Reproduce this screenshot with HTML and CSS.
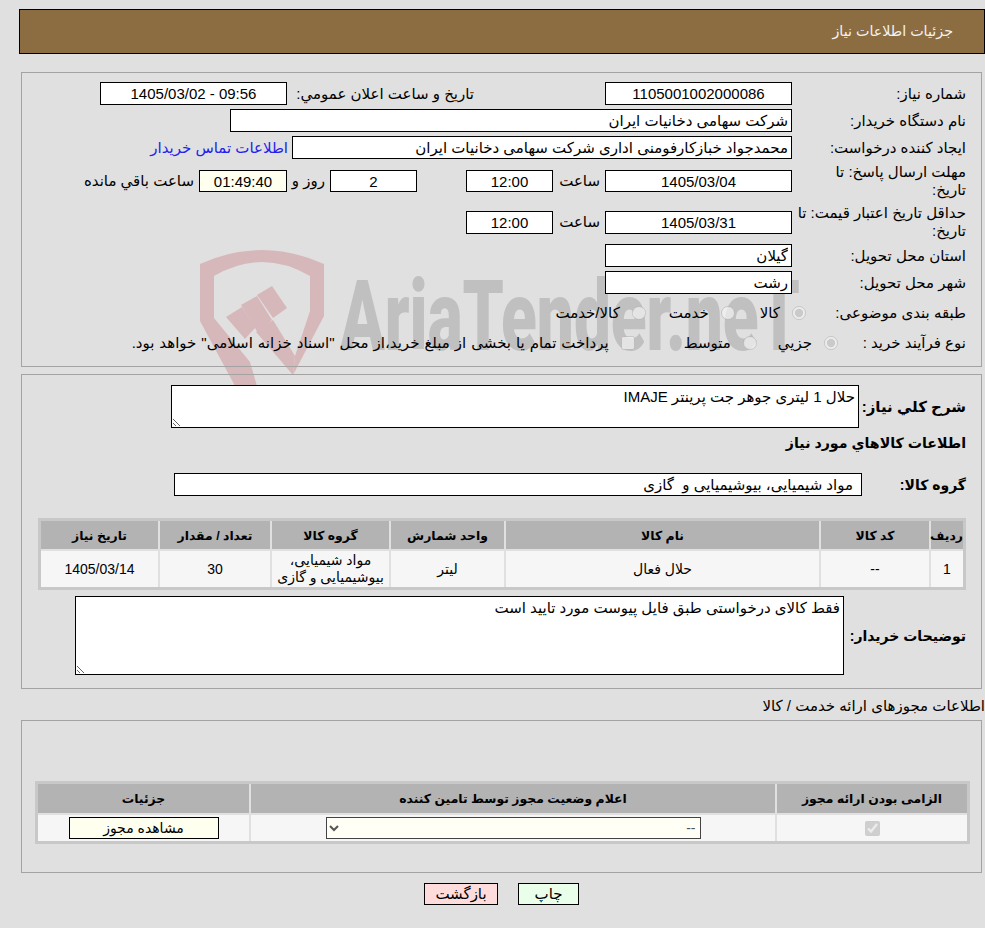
FILE: index.html
```html
<!DOCTYPE html>
<html lang="fa" dir="rtl">
<head>
<meta charset="utf-8">
<title>جزئیات اطلاعات نیاز</title>
<link rel="stylesheet" href="styles.css">
</head>
<body>
<svg class="watermark" viewBox="0 0 620 155" width="620" height="155" aria-hidden="true">
  <path class="wm-shield" d="M0 33 Q62 5 124 33 L124 85 L93 144 L95 125 L110 80 L110 45 Q62 17 14 45 L14 87 L50 131 L57 155 L35 155 L0 90 Z"/>
  <path class="wm-shield" d="M26 86 L42 76 L55 97 L45 108 Z M41 74 L57 65 L72 89 L58 102 Z M57 64 L72 55 L87 77 L73 87 Z M56 101 L73 89 L95 125 L93 144 Z"/>
  <text class="wm-text" x="140" y="119" textLength="460" lengthAdjust="spacingAndGlyphs">AriaTender.neT</text>
</svg>

<header class="page-title">جزئیات اطلاعات نیاز</header>

<section class="panel panel-main">
  <div class="row">
    <label class="lbl">شماره نیاز:</label>
    <input class="field w-date center" value="1105001002000086" readonly>
    <label class="lbl-public">تاریخ و ساعت اعلان عمومي:</label>
    <input class="field w-date center" dir="ltr" value="1405/03/02 - 09:56" readonly>
  </div>
  <div class="row">
    <label class="lbl">نام دستگاه خریدار:</label>
    <input class="field w-buyer" value="شرکت سهامی دخانیات ایران" readonly>
  </div>
  <div class="row">
    <label class="lbl">ایجاد کننده درخواست:</label>
    <input class="field w-creator" value="محمدجواد خبازکارفومنی اداری شرکت سهامی دخانیات ایران" readonly>
    <a class="contact" href="#">اطلاعات تماس خریدار</a>
  </div>
  <div class="row row-tall row-deadline">
    <label class="lbl">مهلت ارسال پاسخ: تا<br>تاریخ:</label>
    <input class="field w-date center short" value="1405/03/04" readonly>
    <span class="hour">ساعت</span>
    <input class="field w-time center short" value="12:00" readonly>
    <input class="field w-days center short" value="2" readonly>
    <span class="days-and">روز و</span>
    <input class="field w-count countdown center short" value="01:49:40" readonly>
    <span class="remain">ساعت باقي مانده</span>
  </div>
  <div class="row row-tall">
    <label class="lbl">حداقل تاریخ اعتبار قیمت: تا<br>تاریخ:</label>
    <input class="field w-date center" value="1405/03/31" readonly>
    <span class="hour">ساعت</span>
    <input class="field w-time center" value="12:00" readonly>
  </div>
  <div class="row">
    <label class="lbl">استان محل تحویل:</label>
    <input class="field w-date" value="گیلان" readonly>
  </div>
  <div class="row">
    <label class="lbl">شهر محل تحویل:</label>
    <input class="field w-date" value="رشت" readonly>
  </div>
  <div class="row row-choice row-first-choice">
    <label class="lbl lbl-choice">طبقه بندی موضوعی:</label>
    <input class="mark" type="radio" name="kind" checked disabled>
    <span class="opt opt-a">کالا</span>
    <input class="mark" type="radio" name="kind" disabled>
    <span class="opt opt-b">خدمت</span>
    <input class="mark" type="radio" name="kind" disabled>
    <span class="opt">کالا/خدمت</span>
  </div>
  <div class="row row-choice">
    <label class="lbl lbl-process">نوع فرآیند خرید :</label>
    <input class="mark" type="radio" name="proc" checked disabled>
    <span class="opt opt-c">جزيي</span>
    <input class="mark" type="radio" name="proc" disabled>
    <span class="opt opt-d">متوسط</span>
    <input class="mark" type="checkbox" disabled>
    <span class="opt opt-long">پرداخت تمام یا بخشی از مبلغ خرید،از محل "اسناد خزانه اسلامی" خواهد بود.</span>
  </div>
</section>

<section class="panel panel-goods">
  <div class="row-need">
    <label class="lbl-bold lbl-need">شرح کلي نیاز:</label>
    <textarea class="note note-need" readonly>حلال 1 لیتری جوهر جت پرینتر IMAJE</textarea>
  </div>
  <h2 class="goods-heading">اطلاعات کالاهاي مورد نیاز</h2>
  <div class="row-group">
    <label class="lbl-bold lbl-group">گروه کالا:</label>
    <input class="field w-group" value="مواد شیمیایی، بیوشیمیایی و  گازی" readonly>
  </div>
  <table class="grid grid-goods">
    <colgroup>
      <col class="c1"><col class="c2"><col class="c3"><col class="c4"><col class="c5"><col class="c6"><col class="c7">
    </colgroup>
    <thead>
      <tr><th>ردیف</th><th>کد کالا</th><th>نام کالا</th><th>واحد شمارش</th><th>گروه کالا</th><th>تعداد / مقدار</th><th>تاریخ نیاز</th></tr>
    </thead>
    <tbody>
      <tr><td>1</td><td>--</td><td>حلال فعال</td><td>لیتر</td><td>مواد شیمیایی، بیوشیمیایی و گازی</td><td>30</td><td>1405/03/14</td></tr>
    </tbody>
  </table>
  <div class="row-remark">
    <label class="lbl-bold lbl-remark">توضیحات خریدار:</label>
    <textarea class="note note-remark" readonly>فقط کالای درخواستی طبق فایل پیوست مورد تایید است</textarea>
  </div>
</section>

<div class="license-title">اطلاعات مجوزهای ارائه خدمت / کالا</div>

<section class="panel panel-license">
  <table class="grid grid-license">
    <colgroup><col class="l1"><col class="l2"><col class="l3"></colgroup>
    <thead>
      <tr><th>الزامی بودن ارائه مجوز</th><th>اعلام وضعیت مجوز توسط تامین کننده</th><th>جزئیات</th></tr>
    </thead>
    <tbody>
      <tr>
        <td><input class="license-check" type="checkbox" checked disabled></td>
        <td><select class="license-select" disabled><option>--</option></select></td>
        <td><button class="license-btn" type="button">مشاهده مجوز</button></td>
      </tr>
    </tbody>
  </table>
</section>

<div class="actions">
  <button class="btn btn-print" type="button">چاپ</button>
  <button class="btn btn-back" type="button">بازگشت</button>
</div>
</body>
</html>
```

FILE: styles.css
```css
html { background: #e0e0e0; }
body {
  margin: 9px 0 0 0;
  font-family: "Liberation Sans", "DejaVu Sans", sans-serif;
  font-size: 15px;
  color: #000;
  position: relative;
}
input, textarea, select, button { font: inherit; color: #000; margin: 0; }

.watermark { position: absolute; left: 200px; top: 222px; z-index: -1; direction: ltr; }
.wm-shield { fill: #d7b8ba; }
.wm-text { fill: #c0c0c0; font-family: Roboto, sans-serif; font-weight: 900; font-size: 98px; }

.page-title {
  margin: 0 0 18px 19px;
  height: 45px;
  box-sizing: border-box;
  border: 1px solid #000;
  background: #8c6d42;
  color: #f2f2f2;
  font-size: 14.3px;
  line-height: 43px;
  padding-right: 31px;
}

.panel { border: 1px solid #a3a3a3; margin: 0 3px 0 21px; box-sizing: border-box; }
.panel-main { margin-bottom: 7px; height: 295px; padding: 9px 15px 0 16px; }
.panel-goods { height: 315px; padding: 10px 15px 0 16px; }
.panel-license { height: 153px; padding: 60px 11px 0 0; }

.row { display: flex; align-items: center; height: 23px; margin-bottom: 4px; }
.row-tall { height: 36px; }
.row-deadline { margin-bottom: 5px; }
.row-choice { height: 30px; margin: 0; }
.row-first-choice { margin-top: 4px; }

.lbl { width: 174px; flex: none; line-height: 18px; white-space: nowrap; }
.lbl-choice { width: 160px; }
.lbl-process { width: 128px; }
.lbl-public { width: 187px; margin-right: 131px; flex: none; white-space: nowrap; }

.field { height: 23px; box-sizing: border-box; border: 1px solid #000; background: #fff; padding: 0 3px; border-radius: 0; outline: none; flex: none; }
.short { height: 22px; }
.center { text-align: center; }
.w-date { width: 187px; }
.w-buyer { width: 562px; }
.w-creator { width: 500px; }
.w-time { width: 87px; }
.w-count { width: 88px; }
.w-days { width: 87px; margin-right: 49px; }
.w-group { width: 688px; padding-right: 8px; }
.countdown { background: #ffffef; }

.contact { color: #2222ee; text-decoration: none; margin-right: 4px; white-space: nowrap; }
.hour { width: 52px; padding-right: 5px; box-sizing: border-box; flex: none; }
.days-and { width: 43px; padding-right: 5px; box-sizing: border-box; flex: none; }
.remain { padding-right: 5px; white-space: nowrap; }

.mark { margin: 0; width: 14px; height: 14px; flex: none; }
.opt { margin-right: 12px; white-space: nowrap; }
.opt-a { margin-left: 25px; }
.opt-b { margin-left: 23px; }
.opt-c { margin-left: 21px; }
.opt-d { margin-left: 49px; }
.opt-long { word-spacing: .8px; }

.row-need { display: flex; align-items: center; height: 43px; }
.lbl-bold { font-weight: 700; flex: none; font-size: 14px; white-space: nowrap; }
.lbl-need { width: 107px; font-size: 15px; }
.note { box-sizing: border-box; border: 1px solid #000; background: #fff; padding: 2px 3px; border-radius: 0; outline: none; }
.note-need { width: 688px; height: 43px; }
.goods-heading { font-size: 14.2px; font-weight: 700; margin: 6px 0 0; height: 25px; line-height: 18px; }
.row-group { display: flex; align-items: center; height: 23px; margin-top: 14px; }
.lbl-group { width: 104px; }

.grid { table-layout: fixed; border-collapse: separate; border-spacing: 0; border: 3px solid #c8c8c8; }
.grid th { background: #b3b3b3; font-size: 12.4px; font-weight: 700; height: 28px; padding: 0; text-align: center; }
.grid td { background: #f6f6f6; border-top: 2px solid #e0e0e0; font-size: 14px; text-align: center; padding: 0; line-height: 17px; }
.grid th + th, .grid td + td { border-right: 2px solid #e0e0e0; }

.grid-goods { width: 928px; margin-top: 22px; }
.grid-goods td { height: 36px; }
.c1 { width: 32px; } .c2 { width: 110px; } .c3 { width: 315px; } .c4 { width: 115px; } .c5 { width: 119px; } .c6 { width: 112px; } .c7 { width: 119px; }

.row-remark { display: flex; align-items: center; margin: 6px 0 0; }
.lbl-remark { width: 122px; }
.note-remark { width: 769px; height: 79px; }

.license-title { height: 31px; line-height: 34px; white-space: nowrap; }

.grid-license { width: 935px; }
.grid-license th { height: 29px; }
.grid-license td { height: 26px; }
.l1 { width: 190px; } .l2 { width: 526px; } .l3 { width: 213px; }
.license-check { width: 15px; height: 15px; margin: 0; vertical-align: middle; }
.license-select { width: 375px; height: 22px; box-sizing: border-box; background: #fffff5; color: #555; border: 1px solid #444; border-radius: 0; vertical-align: middle; opacity: 1; }
.license-btn { width: 150px; height: 22px; box-sizing: border-box; background: #ffffef; border: 1px solid #000; border-radius: 0; padding: 0; vertical-align: middle; }

.actions { display: flex; margin: 10px 0 0; gap: 20px; padding-right: 406px; }
.btn { height: 22px; box-sizing: border-box; border: 1px solid #000; border-radius: 0; padding: 0; }
.btn-print { width: 61px; background: #eaffea; }
.btn-back { width: 74px; background: #ffdcdc; }
```
